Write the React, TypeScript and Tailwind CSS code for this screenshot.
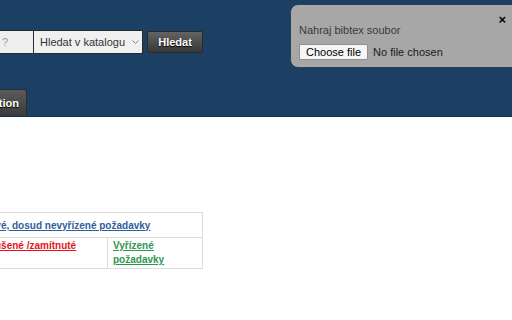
import React from "react";

const App: React.FC = () => {
    return (
        <div className="relative w-[512px] h-[320px] overflow-hidden bg-white font-['Liberation_Sans',Arial,sans-serif]">
            <header className="h-[117px] bg-[#1c4064] border-b border-[#132f4e] flex flex-col">
                <div className="flex items-center pt-[30px]">
                    <div className="w-[33px] h-[24px] bg-[#efefef] border-y border-[#2a2a2a] text-[11px] leading-[22px] text-[#999] pl-[2px]">?</div>
                    <div className="w-[110px] h-[24px] bg-[#f0f0f0] border border-[#2a2a2a] flex items-center justify-between pl-[6px] pr-[3px] text-[11px] text-[#333]">
                        <span>Hledat v katalogu</span>
                        <svg width="7" height="4" viewBox="0 0 7 4" fill="none" stroke="#888" strokeWidth="1">
                            <path d="M0.5 0.5L3.5 3.5L6.5 0.5" />
                        </svg>
                    </div>
                    <button className="ml-[4px] w-[56px] h-[22px] rounded-[2px] border border-[#2b2b2b] bg-gradient-to-b from-[#636363] to-[#383838] text-white text-[11px] font-bold [text-shadow:0_1px_1px_#000]">
                        Hledat
                    </button>
                </div>
                <div className="mt-auto">
                    <div className="w-[27px] h-[27px] rounded-tr-[3px] border-r border-t border-[#2e2e2e] bg-gradient-to-b from-[#5b5b5b] to-[#3b3b3b] overflow-hidden flex items-center justify-end pr-[7px]">
                        <span className="text-white text-[11px] font-bold whitespace-nowrap [text-shadow:0_1px_1px_#000]">Information</span>
                    </div>
                </div>
            </header>

            <div className="absolute top-[4px] left-[290px] w-[240px] h-[64px] rounded-[8px] border border-[#2d3f52] bg-[#a7a7a7] pl-[8px] pt-[18px]">
                <span className="absolute top-[8px] right-[23px] text-[13px] font-bold leading-none text-black">×</span>
                <div className="text-[11px] text-[#3a3a3a] leading-[14px]">Nahraj bibtex soubor</div>
                <label className="mt-[7px] flex items-center text-[11px] text-black">
                    <span className="h-[16px] px-[6px] flex items-center bg-[#f6f6f6] border border-[#8f8f8f] rounded-[2px]">Choose file</span>
                    <span className="ml-[5px] text-[#1a1a1a]">No file chosen</span>
                    <input type="file" className="hidden" />
                </label>
            </div>

            <div className="mt-[95px] -ml-[24px]">
                <table className="border-collapse text-[10px] font-bold">
                    <tbody>
                        <tr>
                            <td colSpan={2} className="h-[25px] border border-[#dcdcdc] pl-[5px] align-middle">
                                <a className="text-[#2f5e9c] underline">Nové, dosud nevyřízené požadavky</a>
                            </td>
                        </tr>
                        <tr>
                            <td className="w-[131px] h-[31px] border border-[#dcdcdc] pl-[8px] pt-[1px] align-top leading-[14px]">
                                <a className="text-[#e5141b] underline">Zrušené /zamítnuté</a>
                            </td>
                            <td className="w-[95px] border border-[#dcdcdc] pl-[5px] pt-[1px] align-top leading-[14px]">
                                <a className="text-[#2f9652] underline">Vyřízené<br />požadavky</a>
                            </td>
                        </tr>
                    </tbody>
                </table>
            </div>
        </div>
    );
};

export default App;
